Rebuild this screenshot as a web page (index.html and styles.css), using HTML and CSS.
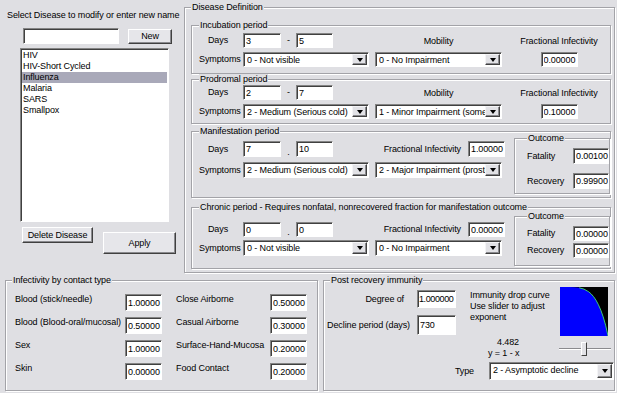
FILE: index.html
```html
<!DOCTYPE html>
<html lang="en">
  <head>
    <meta charset="UTF-8" />
    <title>Disease Editor</title>
    <link rel="stylesheet" href="styles.css">
  </head>

  <body>
    <div class="top">
      <div class="picker">
        <div class="picker-label">Select Disease to modify or enter new name</div>
        <div class="picker-new">
          <input type="text" class="field name-field" value="" />
          <button class="btn btn-new">New</button>
        </div>
        <ul class="listbox">
          <li>HIV</li>
          <li>HIV-Short Cycled</li>
          <li class="selected">Influenza</li>
          <li>Malaria</li>
          <li>SARS</li>
          <li>Smallpox</li>
        </ul>
        <div class="picker-actions">
          <button class="btn btn-delete">Delete Disease</button>
          <button class="btn btn-apply">Apply</button>
        </div>
      </div>

      <fieldset class="group definition">
        <legend>Disease Definition</legend>

        <fieldset class="group period">
          <legend>Incubation period</legend>
          <div class="period-grid grid-incubation">
            <span class="lbl">Days</span>
            <div class="days">
              <input class="field day-a" value="3" /><span class="sep">-</span><input class="field day-b" value="5" />
            </div>
            <span class="col-title">Mobility</span>
            <span class="col-title">Fractional Infectivity</span>
            <span class="lbl">Symptoms</span>
            <div class="combo"><span class="combo-text">0 - Not visible</span><span class="combo-btn"></span></div>
            <div class="combo"><span class="combo-text">0 - No Impairment</span><span class="combo-btn"></span></div>
            <input class="field frac" value="0.00000" />
          </div>
        </fieldset>

        <fieldset class="group period period-prodromal">
          <legend>Prodromal period</legend>
          <div class="period-grid grid-prodromal">
            <span class="lbl">Days</span>
            <div class="days">
              <input class="field day-a" value="2" /><span class="sep">-</span><input class="field day-b" value="7" />
            </div>
            <span class="col-title">Mobility</span>
            <span class="col-title">Fractional Infectivity</span>
            <span class="lbl">Symptoms</span>
            <div class="combo"><span class="combo-text">2 - Medium (Serious cold)</span><span class="combo-btn"></span></div>
            <div class="combo"><span class="combo-text">1 - Minor Impairment (some fa</span><span class="combo-btn"></span></div>
            <input class="field frac" value="0.10000" />
          </div>
        </fieldset>

        <fieldset class="group period period-manifest">
          <legend>Manifestation period</legend>
          <div class="period-body">
            <div class="period-grid grid-manifest">
              <span class="lbl">Days</span>
              <div class="days">
                <input class="field day-a" value="7" /><span class="sep sep-dot">.</span><input class="field day-b" value="10" />
              </div>
              <div class="frac-inline">
                <span>Fractional Infectivity</span>
                <input class="field frac" value="1.00000" />
              </div>
              <span class="lbl">Symptoms</span>
              <div class="combo"><span class="combo-text">2 - Medium (Serious cold)</span><span class="combo-btn"></span></div>
              <div class="combo"><span class="combo-text">2 - Major Impairment (prostrat</span><span class="combo-btn"></span></div>
            </div>
            <fieldset class="group outcome outcome-manifest">
              <legend>Outcome</legend>
              <div class="outcome-row"><span>Fatality</span><input class="field" value="0.00100" /></div>
              <div class="outcome-row"><span>Recovery</span><input class="field" value="0.99900" /></div>
            </fieldset>
          </div>
        </fieldset>

        <fieldset class="group period period-chronic">
          <legend>Chronic period - Requires nonfatal, nonrecovered fraction for manifestation outcome</legend>
          <div class="period-body">
            <div class="period-grid grid-chronic">
              <span class="lbl">Days</span>
              <div class="days">
                <input class="field day-a" value="0" /><span class="sep sep-dot">.</span><input class="field day-b" value="0" />
              </div>
              <div class="frac-inline">
                <span>Fractional Infectivity</span>
                <input class="field frac" value="0.00000" />
              </div>
              <span class="lbl">Symptoms</span>
              <div class="combo"><span class="combo-text">0 - Not visible</span><span class="combo-btn"></span></div>
              <div class="combo"><span class="combo-text">0 - No Impairment</span><span class="combo-btn"></span></div>
            </div>
            <fieldset class="group outcome outcome-chronic">
              <legend>Outcome</legend>
              <div class="outcome-row"><span>Fatality</span><input class="field" value="0.00000" /></div>
              <div class="outcome-row"><span>Recovery</span><input class="field" value="0.00000" /></div>
            </fieldset>
          </div>
        </fieldset>
      </fieldset>
    </div>

    <div class="bottom">
      <fieldset class="group contact">
        <legend>Infectivity by contact type</legend>
        <div class="contact-grid">
          <span>Blood (stick/needle)</span>
          <input class="field" value="1.00000" />
          <span class="lbl-right">Close Airborne</span>
          <input class="field" value="0.50000" />
          <span>Blood (Blood-oral/mucosal)</span>
          <input class="field" value="0.50000" />
          <span class="lbl-right">Casual Airborne</span>
          <input class="field" value="0.30000" />
          <span>Sex</span>
          <input class="field" value="1.00000" />
          <span class="lbl-right">Surface-Hand-Mucosa</span>
          <input class="field" value="0.20000" />
          <span>Skin</span>
          <input class="field" value="0.00000" />
          <span class="lbl-right">Food Contact</span>
          <input class="field" value="0.20000" />
        </div>
      </fieldset>

      <fieldset class="group immunity">
        <legend>Post recovery immunity</legend>
        <div class="immunity-grid">
          <span class="imm-label imm-degree">Degree of</span>
          <input class="field imm-field-a" value="1.000000" />
          <div class="imm-help">Immunity drop curve<br />Use slider to adjust<br />exponent</div>
          <svg class="curve" viewBox="0 0 48 49" preserveAspectRatio="none">
            <rect width="48" height="49" fill="#000" />
            <path d="M0 0 L9.6 0.04 L14.4 0.22 L19.2 0.79 L24 2.15 L28.8 4.86 L31.2 6.96 L33.6 9.7 L36 13.2 L38.4 17.66 L40.8 23.17 L43.2 29.93 L45.6 38.14 L48 49 L0 49 Z" fill="#0000ff" />
            <polyline points="19.2,0.79 24,2.15 28.8,4.86 31.2,6.96 33.6,9.7 36,13.2 38.4,17.66 40.8,23.17 43.2,29.93 45.6,38.14 48,49" fill="none" stroke="#3cc878" stroke-width="1" />
          </svg>

          <span class="imm-label imm-decline">Decline period (days)</span>
          <input class="field imm-field-b" value="730" />

          <div class="formula">
            <div class="formula-exp">4.482</div>
            <div class="formula-main">y = 1 - x</div>
          </div>
          <div class="slider">
            <div class="slider-track"></div>
            <div class="slider-thumb"></div>
          </div>

          <div class="type-row">
            <span class="type-label">Type</span>
            <div class="combo combo-type"><span class="combo-text">2 - Asymptotic decline</span><span class="combo-btn"></span></div>
          </div>
        </div>
      </fieldset>
    </div>
  </body>
</html>
```

FILE: styles.css
```css
body {
  margin: 0;
  width: 617px;
  height: 393px;
  overflow: hidden;
  background-color: #dfdfe3;
  font-family: "Liberation Sans", Arial, sans-serif;
  font-size: 9px;
  line-height: 11px;
  letter-spacing: -0.1px;
  color: #000;
}

/* shared win32 style controls */

.group {
  margin: 0;
  padding: 0;
  min-width: 0;
  box-sizing: border-box;
  border: 1px solid #a3a3a8;
  box-shadow: inset 1px 1px 0 #fff, 1px 1px 0 #fff;
}

.group > legend {
  padding: 0 1px;
  line-height: 11px;
  background-color: #dfdfe3;
  white-space: nowrap;
}

.field {
  box-sizing: border-box;
  height: 16px;
  margin: 0;
  padding: 0 0 0 2px;
  border: 1px solid;
  border-color: #848484 #fff #fff #848484;
  box-shadow: inset 1px 1px 0 #404040;
  background-color: #fff;
  font: inherit;
  letter-spacing: inherit;
  color: #000;
  outline: none;
}

.btn {
  box-sizing: border-box;
  margin: 0;
  padding: 0;
  border: 1px solid;
  border-color: #fff #404040 #404040 #fff;
  box-shadow: inset -1px -1px 0 #8a8a8e;
  background-color: #e6e6ea;
  font: inherit;
  letter-spacing: inherit;
  color: #000;
}

.combo {
  box-sizing: border-box;
  height: 16px;
  display: flex;
  align-items: stretch;
  padding: 1px 1px 1px 3px;
  border: 1px solid;
  border-color: #848484 #fff #fff #848484;
  box-shadow: inset 1px 1px 0 #404040;
  background-color: #fff;
  white-space: nowrap;
}

.combo-text {
  flex: 1;
  overflow: hidden;
  line-height: 12px;
}

.combo-btn {
  flex: none;
  width: 15px;
  box-sizing: border-box;
  display: flex;
  align-items: center;
  justify-content: center;
  border: 1px solid;
  border-color: #f4f4f6 #404040 #404040 #f4f4f6;
  box-shadow: inset -1px -1px 0 #8a8a8e;
  background-color: #e2e2e6;
}

.combo-btn::after {
  content: "";
  border-top: 4px solid #000;
  border-left: 3px solid transparent;
  border-right: 3px solid transparent;
}

/* top half */

.top {
  display: flex;
  margin-top: 2px;
}

.picker {
  width: 184px;
  flex: none;
}

.picker-label {
  padding: 8px 0 0 7px;
  white-space: nowrap;
}

.picker-new {
  display: flex;
  align-items: center;
  margin: 7px 0 0 23px;
}

.name-field {
  width: 96px;
}

.btn-new {
  width: 44px;
  height: 15px;
  margin-left: 9px;
}

.listbox {
  list-style: none;
  box-sizing: border-box;
  width: 149px;
  height: 174px;
  margin: 4px 0 0 20px;
  padding: 1px;
  border: 1px solid;
  border-color: #848484 #fff #fff #848484;
  box-shadow: inset 1px 1px 0 #404040;
  background-color: #fff;
}

.listbox li {
  padding-left: 1px;
  line-height: 11px;
}

.listbox .selected {
  background-color: #a9a9b9;
}

.picker-actions {
  display: flex;
  align-items: flex-start;
  margin: 5px 0 0 22px;
}

.btn-delete {
  width: 71px;
  height: 16px;
}

.btn-apply {
  width: 73px;
  height: 22px;
  margin: 5px 0 0 10px;
}

.definition {
  width: 431px;
  flex: none;
  padding: 7px 3px 3px 6px;
}

.period {
  padding: 0 0 0 7px;
}

.period-prodromal {
  margin-top: 0;
}

.period-manifest {
  margin-top: 2px;
}

.period-chronic {
  margin-top: 4px;
}

.period-body {
  display: flex;
  align-items: flex-start;
}

.period-grid {
  display: grid;
  grid-template-columns: 38px 126px 127px 1fr;
  column-gap: 6px;
  align-items: center;
}

.grid-incubation {
  grid-template-rows: 15px 15px;
  row-gap: 4px;
  padding: 2px 0 6px;
}

.grid-prodromal {
  grid-template-rows: 15px 15px;
  row-gap: 4px;
  padding: 0 0 4px;
}

.grid-manifest {
  grid-template-columns: 38px 126px 127px;
  grid-template-rows: 16px 16px;
  row-gap: 5px;
  padding: 4px 0 19px;
}

.grid-chronic {
  grid-template-columns: 38px 126px 127px;
  grid-template-rows: 15px 16px;
  row-gap: 3px;
  padding: 9px 0 12px;
}

.period-grid .combo {
  height: 100%;
}

.lbl {
  text-align: center;
  white-space: nowrap;
}

.col-title {
  text-align: center;
  white-space: nowrap;
  padding-top: 2px;
}

.days {
  display: flex;
  align-items: center;
  height: 100%;
}

.days .field {
  height: 100%;
}

.day-a {
  width: 38px;
}

.day-b {
  width: 37px;
}

.sep {
  width: 15px;
  text-align: center;
}

.sep-dot {
  align-self: flex-end;
  line-height: 9px;
}

.frac {
  width: 37px;
  height: 100%;
  justify-self: center;
}

.frac-inline {
  display: flex;
  align-items: center;
  justify-content: flex-end;
  height: 100%;
  margin-right: -3px;
  white-space: nowrap;
}

.frac-inline .field {
  margin-left: 7px;
}

.outcome {
  width: 96px;
  flex: none;
  margin-left: 12px;
  padding: 0 0 0 12px;
}

.outcome-manifest {
  margin-top: -4px;
  padding-top: 4px;
  padding-bottom: 4px;
}

.outcome-chronic {
  margin-top: -2px;
  padding-top: 4px;
  padding-bottom: 7px;
}

.outcome-row {
  display: flex;
  align-items: center;
  justify-content: space-between;
}

.outcome-row .field {
  width: 36px;
}

.outcome-manifest .outcome-row + .outcome-row {
  margin-top: 9px;
}

.outcome-chronic .field {
  height: 15px;
}

.outcome-chronic .outcome-row + .outcome-row {
  margin-top: 2px;
}

/* bottom half */

.bottom {
  display: flex;
  margin-top: 2px;
}

.contact {
  width: 313px;
  margin-left: 5px;
  padding: 0 0 0 6px;
}

.contact-grid {
  display: grid;
  grid-template-columns: 110px 37px 108px 37px;
  grid-auto-rows: 17px;
  row-gap: 6px;
  padding: 8px 0 10px 3px;
  white-space: nowrap;
}

.contact-grid .field {
  height: 17px;
}

.lbl-right {
  padding-left: 14px;
}

.immunity {
  width: 292px;
  margin-left: 5px;
  padding: 0 0 0 3px;
}

.immunity > legend {
  margin-left: 3px;
}

.immunity-grid {
  display: grid;
  grid-template-columns: 83px 39px 90px 48px;
  grid-template-rows: 26px 22px 25px 18px;
  column-gap: 7px;
  padding-top: 3px;
  white-space: nowrap;
}

.imm-label {
  grid-column: 1;
  text-align: right;
  align-self: start;
}

.imm-degree {
  grid-row: 1;
  padding: 5px 6px 0 0;
}

.imm-decline {
  grid-row: 2;
  padding-top: 5px;
}

.imm-field-a {
  grid-column: 2;
  grid-row: 1;
  height: 18px;
  margin-top: 1px;
  padding-left: 1px;
  letter-spacing: -0.4px;
}

.imm-field-b {
  grid-column: 2;
  grid-row: 2;
  height: 20px;
}

.imm-help {
  grid-column: 3;
  grid-row: 1 / 3;
  padding: 1px 0 0 7px;
}

.curve {
  grid-column: 4;
  grid-row: 1 / 3;
  width: 48px;
  height: 49px;
  margin-top: -2px;
  display: block;
}

.formula {
  grid-column: 3;
  grid-row: 3;
}

.formula-exp {
  padding-left: 34px;
}

.formula-main {
  padding-left: 25px;
}

.slider {
  grid-column: 4;
  grid-row: 3;
  position: relative;
  width: 52px;
  height: 14px;
  margin: 5px 0 0 -1px;
}

.slider-track {
  margin-top: 6px;
  height: 2px;
  box-sizing: border-box;
  border-top: 1px solid #8a8a8e;
  border-bottom: 1px solid #fff;
}

.slider-thumb {
  position: absolute;
  left: 22px;
  top: 0;
  width: 6px;
  height: 14px;
  box-sizing: border-box;
  border: 1px solid;
  border-color: #fff #404040 #404040 #fff;
  background-color: #e2e2e6;
}

.type-row {
  grid-column: 2 / 5;
  grid-row: 4;
  display: flex;
  align-items: center;
  justify-content: flex-end;
  margin-right: -6px;
}

.type-label {
  margin-right: 15px;
}

.combo-type {
  width: 125px;
  height: 18px;
}
```
